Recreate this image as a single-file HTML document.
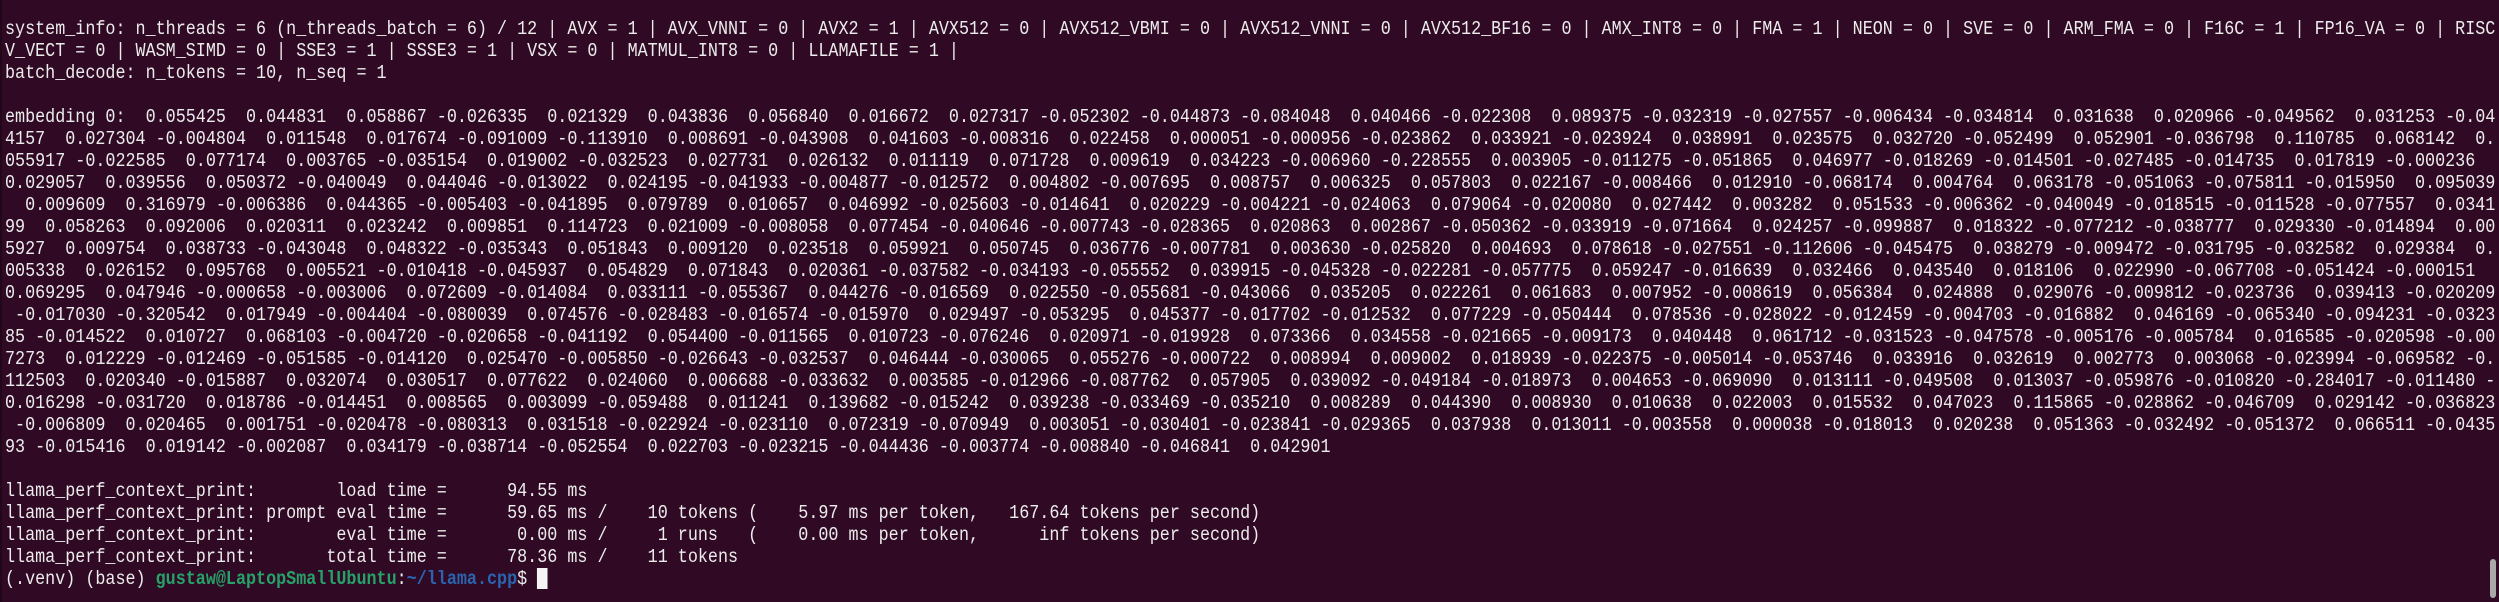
<!DOCTYPE html>
<html><head><meta charset="utf-8"><style>
html,body{margin:0;padding:0;background:#300a24;width:2499px;height:602px;overflow:hidden}
.edge{position:absolute;left:0;top:0;width:2px;height:602px;background:#220719}
.term{position:absolute;left:5px;top:18px;width:2900px;transform-origin:0 0;transform:scaleX(0.8807)}
pre{margin:0;font-family:"Liberation Mono",monospace;font-size:19px;line-height:22px;color:#ececec;white-space:pre}
.g{color:#26a269;font-weight:bold}.b{color:#2a64b0;font-weight:bold}
.cur{display:inline-block;width:11.4px;height:21px;background:#f4f4f4;vertical-align:-5px}
.sb{position:absolute;left:2490px;top:559px;width:6px;height:39px;border-radius:3px;background:#a9a9a9}
</style></head><body>
<div class="edge"></div>
<div class="term"><pre>system_info: n_threads = 6 (n_threads_batch = 6) / 12 | AVX = 1 | AVX_VNNI = 0 | AVX2 = 1 | AVX512 = 0 | AVX512_VBMI = 0 | AVX512_VNNI = 0 | AVX512_BF16 = 0 | AMX_INT8 = 0 | FMA = 1 | NEON = 0 | SVE = 0 | ARM_FMA = 0 | F16C = 1 | FP16_VA = 0 | RISC
V_VECT = 0 | WASM_SIMD = 0 | SSE3 = 1 | SSSE3 = 1 | VSX = 0 | MATMUL_INT8 = 0 | LLAMAFILE = 1 |
batch_decode: n_tokens = 10, n_seq = 1

embedding 0:  0.055425  0.044831  0.058867 -0.026335  0.021329  0.043836  0.056840  0.016672  0.027317 -0.052302 -0.044873 -0.084048  0.040466 -0.022308  0.089375 -0.032319 -0.027557 -0.006434 -0.034814  0.031638  0.020966 -0.049562  0.031253 -0.04
4157  0.027304 -0.004804  0.011548  0.017674 -0.091009 -0.113910  0.008691 -0.043908  0.041603 -0.008316  0.022458  0.000051 -0.000956 -0.023862  0.033921 -0.023924  0.038991  0.023575  0.032720 -0.052499  0.052901 -0.036798  0.110785  0.068142  0.
055917 -0.022585  0.077174  0.003765 -0.035154  0.019002 -0.032523  0.027731  0.026132  0.011119  0.071728  0.009619  0.034223 -0.006960 -0.228555  0.003905 -0.011275 -0.051865  0.046977 -0.018269 -0.014501 -0.027485 -0.014735  0.017819 -0.000236
0.029057  0.039556  0.050372 -0.040049  0.044046 -0.013022  0.024195 -0.041933 -0.004877 -0.012572  0.004802 -0.007695  0.008757  0.006325  0.057803  0.022167 -0.008466  0.012910 -0.068174  0.004764  0.063178 -0.051063 -0.075811 -0.015950  0.095039
  0.009609  0.316979 -0.006386  0.044365 -0.005403 -0.041895  0.079789  0.010657  0.046992 -0.025603 -0.014641  0.020229 -0.004221 -0.024063  0.079064 -0.020080  0.027442  0.003282  0.051533 -0.006362 -0.040049 -0.018515 -0.011528 -0.077557  0.0341
99  0.058263  0.092006  0.020311  0.023242  0.009851  0.114723  0.021009 -0.008058  0.077454 -0.040646 -0.007743 -0.028365  0.020863  0.002867 -0.050362 -0.033919 -0.071664  0.024257 -0.099887  0.018322 -0.077212 -0.038777  0.029330 -0.014894  0.00
5927  0.009754  0.038733 -0.043048  0.048322 -0.035343  0.051843  0.009120  0.023518  0.059921  0.050745  0.036776 -0.007781  0.003630 -0.025820  0.004693  0.078618 -0.027551 -0.112606 -0.045475  0.038279 -0.009472 -0.031795 -0.032582  0.029384  0.
005338  0.026152  0.095768  0.005521 -0.010418 -0.045937  0.054829  0.071843  0.020361 -0.037582 -0.034193 -0.055552  0.039915 -0.045328 -0.022281 -0.057775  0.059247 -0.016639  0.032466  0.043540  0.018106  0.022990 -0.067708 -0.051424 -0.000151
0.069295  0.047946 -0.000658 -0.003006  0.072609 -0.014084  0.033111 -0.055367  0.044276 -0.016569  0.022550 -0.055681 -0.043066  0.035205  0.022261  0.061683  0.007952 -0.008619  0.056384  0.024888  0.029076 -0.009812 -0.023736  0.039413 -0.020209
 -0.017030 -0.320542  0.017949 -0.004404 -0.080039  0.074576 -0.028483 -0.016574 -0.015970  0.029497 -0.053295  0.045377 -0.017702 -0.012532  0.077229 -0.050444  0.078536 -0.028022 -0.012459 -0.004703 -0.016882  0.046169 -0.065340 -0.094231 -0.0323
85 -0.014522  0.010727  0.068103 -0.004720 -0.020658 -0.041192  0.054400 -0.011565  0.010723 -0.076246  0.020971 -0.019928  0.073366  0.034558 -0.021665 -0.009173  0.040448  0.061712 -0.031523 -0.047578 -0.005176 -0.005784  0.016585 -0.020598 -0.00
7273  0.012229 -0.012469 -0.051585 -0.014120  0.025470 -0.005850 -0.026643 -0.032537  0.046444 -0.030065  0.055276 -0.000722  0.008994  0.009002  0.018939 -0.022375 -0.005014 -0.053746  0.033916  0.032619  0.002773  0.003068 -0.023994 -0.069582 -0.
112503  0.020340 -0.015887  0.032074  0.030517  0.077622  0.024060  0.006688 -0.033632  0.003585 -0.012966 -0.087762  0.057905  0.039092 -0.049184 -0.018973  0.004653 -0.069090  0.013111 -0.049508  0.013037 -0.059876 -0.010820 -0.284017 -0.011480 -
0.016298 -0.031720  0.018786 -0.014451  0.008565  0.003099 -0.059488  0.011241  0.139682 -0.015242  0.039238 -0.033469 -0.035210  0.008289  0.044390  0.008930  0.010638  0.022003  0.015532  0.047023  0.115865 -0.028862 -0.046709  0.029142 -0.036823
 -0.006809  0.020465  0.001751 -0.020478 -0.080313  0.031518 -0.022924 -0.023110  0.072319 -0.070949  0.003051 -0.030401 -0.023841 -0.029365  0.037938  0.013011 -0.003558  0.000038 -0.018013  0.020238  0.051363 -0.032492 -0.051372  0.066511 -0.0435
93 -0.015416  0.019142 -0.002087  0.034179 -0.038714 -0.052554  0.022703 -0.023215 -0.044436 -0.003774 -0.008840 -0.046841  0.042901

llama_perf_context_print:        load time =      94.55 ms
llama_perf_context_print: prompt eval time =      59.65 ms /    10 tokens (    5.97 ms per token,   167.64 tokens per second)
llama_perf_context_print:        eval time =       0.00 ms /     1 runs   (    0.00 ms per token,      inf tokens per second)
llama_perf_context_print:       total time =      78.36 ms /    11 tokens
(.venv) (base) <span class="g">gustaw@LaptopSmallUbuntu</span>:<span class="b">~/llama.cpp</span>$ <span class="cur"></span></pre></div>
<div class="sb"></div>
</body></html>
